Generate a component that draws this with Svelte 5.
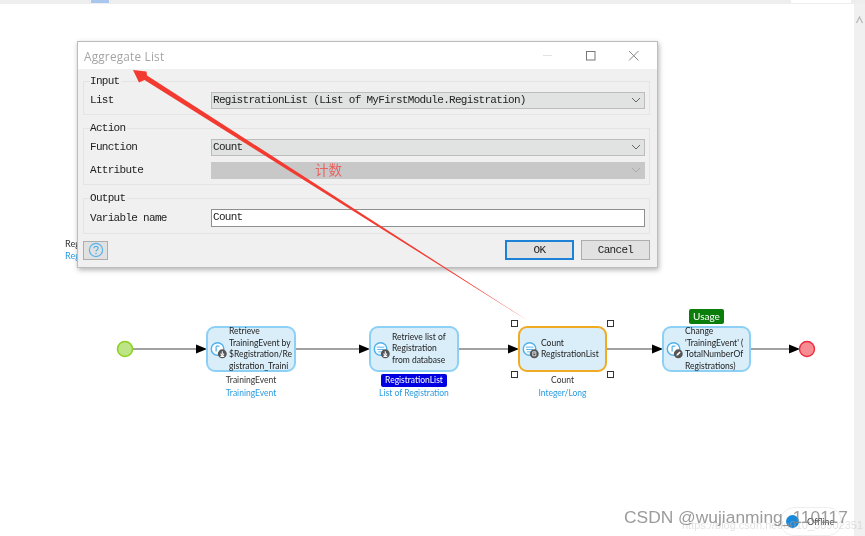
<script>
  const nodes = [
    { x: 206, w: 90, lines: ["Retrieve", "TrainingEvent by", "$Registration/Re", "gistration_Traini"], badge: "down", name: "TrainingEvent", type: "TrainingEvent", kind: "obj" },
    { x: 369, w: 90, lines: ["Retrieve list of", "Registration", "from database"], badge: "down", name: "RegistrationList", type: "List of Registration", chip: true, kind: "list" },
    { x: 518, w: 89, lines: ["Count", "RegistrationList"], badge: "calc", name: "Count", type: "Integer/Long", selected: true, kind: "list" },
    { x: 662, w: 89, lines: ["Change", "'TrainingEvent' (", "TotalNumberOf", "Registrations)"], badge: "edit", kind: "obj" }
  ]
  const links = [
    [133, 206], [296, 369], [459, 518], [607, 662], [751, 799]
  ]
</script>

<main class="page">
  <div class="topbar">
    <span class="tab"></span>
    <span class="tab-white"></span>
  </div>
  <div class="scrollbar">
    <svg width="11" height="10" viewBox="0 0 11 10"><path d="M2.5 8 L5.5 2 L8.5 8" fill="none" stroke="#b5b5b5" stroke-width="1.2" /></svg>
  </div>

  <div class="behind behind-a">Reg</div>
  <div class="behind behind-b">Reg</div>

  <svg class="wires" width="865" height="536" viewBox="0 0 865 536">
    {#each links as [a, b]}
      <line x1={a} y1="349" x2={b - 10} y2="349" stroke="#444" stroke-width="1.2" />
      <path d={`M${b - 10} 344.5 L${b + 1} 349 L${b - 10} 353.5 Z`} fill="#000" />
    {/each}
    <circle cx="125" cy="349" r="7.5" fill="#bde487" stroke="#8fd11f" stroke-width="1.6" />
    <circle cx="807" cy="349" r="7.5" fill="#f78d94" stroke="#ee2a3c" stroke-width="1.4" />
  </svg>

  {#each nodes as n}
    <div class="node" class:selected={n.selected} style="left:{n.x}px;width:{n.w}px">
      <span class="icon">
        <svg width="20" height="20" viewBox="0 0 20 20">
          <circle cx="9" cy="9" r="6.6" fill="#fff" stroke="#4fb1ee" stroke-width="1.5" />
          {#if n.kind === "list"}
            <path d="M5 7 H13 M5.5 9.5 H12.5 M6.5 12 H11.5" stroke="#4fb1ee" stroke-width="1" />
          {:else}
            <path d="M7.5 6 H11 M7.5 6 V11.5" stroke="#4fb1ee" stroke-width="1.3" fill="none" />
          {/if}
          <circle cx="14" cy="14" r="4.7" fill="#555" />
          {#if n.badge === "down"}
            <path d="M14 11.3 V14.5 M12.2 13.9 L14 16.1 L15.8 13.9 M12 16.7 H16" stroke="#fff" stroke-width="1.1" fill="none" />
          {:else if n.badge === "calc"}
            <path d="M12.4 11.9 H15.6 V16.1 H12.4 Z M13.1 13.3 H14.9" stroke="#ddd" stroke-width="1" fill="none" />
          {:else}
            <path d="M11.9 16.1 L12.5 14.3 L15.3 11.5 L16.5 12.7 L13.7 15.5 Z" fill="#fff" />
          {/if}
        </svg>
      </span>
      <span class="node-text">
        {#each n.lines as line}<span class="line">{line}</span>{/each}
      </span>
    </div>
    {#if n.name}
      <div class="caption" style="left:{n.x - 20}px;width:{n.w + 40}px">
        <span class="var" class:chip={n.chip}>{n.name}</span>
        <span class="type">{n.type}</span>
      </div>
    {/if}
  {/each}

  <span class="usage">Usage</span>

  {#each [[514, 323], [610, 323], [514, 374], [610, 374]] as [x, y]}
    <span class="handle" style="left:{x - 3}px;top:{y - 3}px"></span>
  {/each}

  <section class="dialog">
    <header class="titlebar">
      <h1>Aggregate List</h1>
      <div class="win-buttons">
        <svg width="12" height="12" viewBox="0 0 12 12"><path d="M1 5.5 H10" stroke="#e3e3e3" stroke-width="1" /></svg>
        <svg width="12" height="12" viewBox="0 0 12 12"><rect x="1.5" y="1.5" width="8.5" height="8.5" fill="none" stroke="#777" stroke-width="1" /></svg>
        <svg width="12" height="12" viewBox="0 0 12 12"><path d="M1 1 L10.5 10.5 M10.5 1 L1 10.5" stroke="#888" stroke-width="1" /></svg>
      </div>
    </header>

    <div class="body">
      <fieldset class="group group-input">
        <legend>Input</legend>
        <div class="row">
          <span class="label">List</span>
          <div class="select">RegistrationList (List of MyFirstModule.Registration)<svg class="chev" width="10" height="6" viewBox="0 0 10 6"><path d="M1 1 L5 5 L9 1" fill="none" stroke="#666" stroke-width="1" /></svg></div>
        </div>
      </fieldset>

      <fieldset class="group group-action">
        <legend>Action</legend>
        <div class="row">
          <span class="label">Function</span>
          <div class="select">Count<svg class="chev" width="10" height="6" viewBox="0 0 10 6"><path d="M1 1 L5 5 L9 1" fill="none" stroke="#666" stroke-width="1" /></svg></div>
        </div>
        <div class="row">
          <span class="label">Attribute</span>
          <div class="select disabled"><svg class="chev" width="10" height="6" viewBox="0 0 10 6"><path d="M1 1 L5 5 L9 1" fill="none" stroke="#aaa" stroke-width="1" /></svg></div>
        </div>
      </fieldset>

      <fieldset class="group group-output">
        <legend>Output</legend>
        <div class="row">
          <span class="label">Variable name</span>
          <div class="textbox">Count</div>
        </div>
      </fieldset>

      <footer class="actions">
        <button type="button" class="help" aria-label="Help">
          <svg width="16" height="16" viewBox="0 0 16 16">
            <circle cx="8" cy="8" r="6.6" fill="none" stroke="#55b4ee" stroke-width="1.2" />
            <path d="M5.9 6.3 C5.9 3.8 10.2 3.8 10.2 6.2 C10.2 7.8 8 7.7 8 9.6" fill="none" stroke="#55b4ee" stroke-width="1.2" />
            <circle cx="8" cy="11.5" r="0.8" fill="#55b4ee" />
          </svg>
        </button>
        <button type="button" class="btn primary">OK</button>
        <button type="button" class="btn">Cancel</button>
      </footer>
    </div>
  </section>

  <svg class="arrow" width="865" height="536" viewBox="0 0 865 536">
    <path d="M133 70 L146.5 71.5 L147 75.5 L528.5 321 L144.5 80 L139 82.5 Z" fill="#f33a30" />
  </svg>
  <span class="note">计数</span>

  <div class="offline"><span class="dot"></span>Offline</div>
  <span class="url">https://blog.csdn.net/u010_38902351</span>
  <span class="watermark">CSDN @wujianming_110117</span>
</main>

<style>
  :global(body) {
    margin: 0;
    background: #fff;
  }

  .page {
    position: relative;
    width: 865px;
    height: 536px;
    overflow: hidden;
    background: #fff;
    font-family: Lato, "Open Sans", sans-serif;
    filter: blur(0.35px);
  }

  .topbar {
    position: absolute;
    inset: 0 0 auto 0;
    height: 4px;
    background: #eeeeee;
  }

  .tab {
    position: absolute;
    left: 91px;
    top: 0;
    width: 18px;
    height: 3px;
    background: #a9c6ee;
  }

  .tab-white {
    position: absolute;
    left: 791px;
    top: 0;
    width: 60px;
    height: 3px;
    background: #fff;
  }

  .scrollbar {
    position: absolute;
    right: 0;
    top: 4px;
    bottom: 0;
    width: 11px;
    background: #f0f0f0;
    display: flex;
    justify-content: center;
    padding-top: 11px;
    box-sizing: border-box;
  }

  .behind {
    position: absolute;
    left: 65px;
    font-size: 9.2px;
    line-height: 12px;
    color: #333;
  }

  .behind-a { top: 238px; }
  .behind-b { top: 250px; color: #2a9be0; }

  .wires,
  .arrow {
    position: absolute;
    left: 0;
    top: 0;
  }

  .node {
    position: absolute;
    top: 326px;
    height: 46px;
    box-sizing: border-box;
    display: flex;
    align-items: center;
    gap: 1px;
    padding-left: 1px;
    background: #daeefa;
    border: 2px solid #8dd0f5;
    border-radius: 9px;
  }

  .node.selected {
    border-color: #f0ab22;
  }

  .icon {
    flex: none;
    display: flex;
    width: 19px;
    margin-top: 2px;
  }

  .node-text {
    display: flex;
    flex-direction: column;
    font-size: 8.5px;
    line-height: 11.5px;
    color: #222;
    white-space: nowrap;
  }

  .line {
    display: block;
  }

  .caption {
    position: absolute;
    top: 374px;
    display: flex;
    flex-direction: column;
    align-items: center;
    font-size: 8.5px;
    line-height: 13px;
  }

  .var {
    color: #333;
  }

  .var.chip {
    background: #0000e0;
    color: #fff;
    border-radius: 2px;
    padding: 0 4px;
  }

  .type {
    color: #2a9be0;
  }

  .usage {
    position: absolute;
    left: 689px;
    top: 309px;
    width: 35px;
    height: 15px;
    line-height: 15px;
    text-align: center;
    font-size: 10px;
    color: #fff;
    background: #0a7d0a;
    border-radius: 2px;
  }

  .handle {
    position: absolute;
    width: 7px;
    height: 7px;
    box-sizing: border-box;
    background: #fff;
    border: 1px solid #333;
  }

  .dialog {
    position: absolute;
    left: 77px;
    top: 41px;
    width: 581px;
    height: 227px;
    box-sizing: border-box;
    display: flex;
    flex-direction: column;
    border: 1px solid #bdbdbd;
    background: #f0f0f0;
    box-shadow: 1px 2px 5px rgba(0, 0, 0, 0.3);
    font-family: "Liberation Mono", monospace;
    font-size: 11px;
    letter-spacing: -0.7px;
    color: #222;
  }

  .titlebar {
    flex: none;
    height: 27px;
    background: #fff;
    display: flex;
    align-items: center;
    justify-content: space-between;
    padding: 0 17px 0 6px;
  }

  h1 {
    margin: 0;
    font-family: "Open Sans", sans-serif;
    font-size: 11.8px;
    font-weight: 400;
    letter-spacing: 0.2px;
    color: #a5a5a5;
  }

  .win-buttons {
    display: flex;
    gap: 31px;
    align-items: center;
  }

  .body {
    flex: 1;
    padding: 6px 7px 0 5px;
    display: flex;
    flex-direction: column;
    min-height: 0;
  }

  .group {
    margin: 0;
    min-width: 0;
    padding: 4px 4px 0 6px;
    border: 1px solid #e4e4e4;
    display: flex;
    flex-direction: column;
    gap: 6px;
    box-sizing: border-box;
  }

  legend {
    padding: 0 2px 0 0;
    margin-left: 0;
    line-height: 13px;
    height: 13px;
  }

  .group-input { height: 40px; }
  .group-action { height: 63px; margin-top: 7px; }
  .group-output { height: 42px; margin-top: 7px; }

  .row {
    display: flex;
    align-items: center;
  }

  .label {
    flex: none;
    width: 121px;
    line-height: 17px;
  }

  .select,
  .textbox {
    flex: 1;
    height: 17px;
    line-height: 15px;
    box-sizing: border-box;
    padding: 0 1px;
    position: relative;
    white-space: nowrap;
  }

  .select {
    background: #e1e3e3;
    border: 1px solid #bcbcbc;
  }

  .select.disabled {
    background: #c8c8c8;
    border-color: #c8c8c8;
  }

  .chev {
    position: absolute;
    right: 3px;
    top: 4px;
  }

  .textbox {
    height: 18px;
    line-height: 15px;
    background: #fff;
    border: 1px solid #8f8f8f;
    padding: 0 1px;
  }

  .actions {
    display: flex;
    align-items: center;
    margin-top: 6px;
    gap: 7px;
  }

  .help {
    width: 25px;
    height: 19px;
    padding: 0;
    margin-right: auto;
    display: flex;
    align-items: center;
    justify-content: center;
    background: #e1e1e1;
    border: 1px solid #adadad;
  }

  .btn {
    width: 69px;
    height: 20px;
    padding: 0;
    box-sizing: border-box;
    font: inherit;
    letter-spacing: inherit;
    color: #222;
    background: #e1e1e1;
    border: 1px solid #adadad;
  }

  .btn.primary {
    border: 2px solid #1b82d6;
  }

  .note {
    position: absolute;
    left: 315px;
    top: 160px;
    font-family: "Noto Sans CJK SC", serif;
    font-size: 13.5px;
    line-height: 18px;
    color: #e8635f;
  }

  .watermark {
    position: absolute;
    left: 624px;
    top: 507px;
    font-family: "Liberation Sans", sans-serif;
    font-size: 17.4px;
    line-height: 20px;
    white-space: nowrap;
    color: rgba(130, 130, 130, 0.8);
  }

  .url {
    position: absolute;
    left: 682px;
    top: 517px;
    font-family: "Liberation Sans", sans-serif;
    font-size: 11px;
    line-height: 16px;
    white-space: nowrap;
    color: rgba(190, 190, 190, 0.45);
  }

  .offline {
    position: absolute;
    left: 780px;
    top: 507px;
    width: 62px;
    height: 29px;
    box-sizing: border-box;
    border: 1px solid #eeeeee;
    border-radius: 14px;
    display: flex;
    align-items: center;
    gap: 8px;
    padding-left: 5px;
    font-size: 9px;
    color: #444;
  }

  .dot {
    width: 13px;
    height: 13px;
    border-radius: 50%;
    background: #1a88d8;
  }
</style>
